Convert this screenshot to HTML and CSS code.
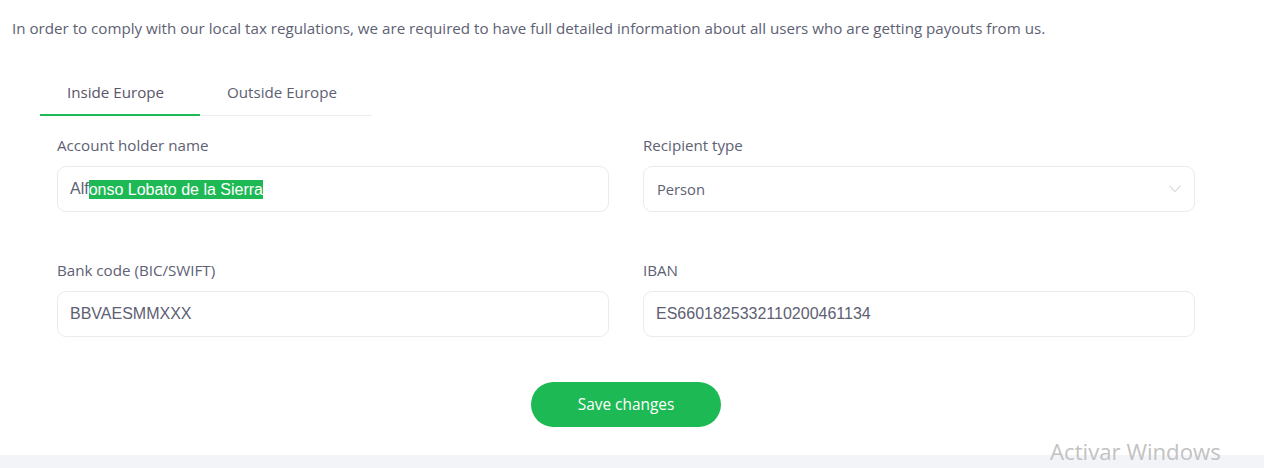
FILE: index.html
```html
<!DOCTYPE html>
<html>
<head>
<meta charset="utf-8">
<link rel="stylesheet" href="styles.css">
</head>
<body>
<main class="page">
  <p class="intro">In order to comply with our local tax regulations, we are required to have full detailed information about all users who are getting payouts from us.</p>
  <nav class="tabs">
    <div class="tab active">Inside Europe</div>
    <div class="tab">Outside Europe</div>
  </nav>
  <form class="form">
    <div class="grid">
      <div class="field">
        <div class="label">Account holder name</div>
        <div class="input">Alf<span class="sel">onso Lobato de la Sierra</span></div>
      </div>
      <div class="field">
        <div class="label">Recipient type</div>
        <div class="input select"><span class="sel-text">Person</span>
          <svg class="chev" width="12" height="8" viewBox="0 0 12 8"><path d="M0.5 0.8 L6 6.6 L11.5 0.8" fill="none" stroke="#c4c6cc" stroke-width="1"/></svg>
        </div>
      </div>
      <div class="field">
        <div class="label">Bank code (BIC/SWIFT)</div>
        <div class="input">BBVAESMMXXX</div>
      </div>
      <div class="field">
        <div class="label">IBAN</div>
        <div class="input">ES6601825332110200461134</div>
      </div>
    </div>
    <div class="actions"><button type="button" class="btn">Save changes</button></div>
  </form>
</main>
<div class="footer-band"></div>
<div class="watermark">Activar Windows</div>
</body>
</html>
```
FILE: styles.css
```css
html, body { margin: 0; padding: 0; background: #fff; }
body { font-family: "Open Sans", "Noto Sans", sans-serif; color: #5d6173; height: 468px; overflow: hidden; position: relative; }
.page { height: 455px; }
.intro { margin: 0; padding: 17px 12px 0; font-size: 15.15px; line-height: 22px; color: #5d6173; }
.tabs { display: flex; margin: 31px 0 0 40px; width: 332px; border-bottom: 1px solid #ececec; }
.tab { width: 160px; box-sizing: border-box; padding: 12px 0 12px 27px; text-align: left; font-size: 15.15px; line-height: 20px; color: #5d6173; }
.tab.active { color: #5a5568; border-bottom: 2px solid #1db954; margin-bottom: -1px; }
.form { padding: 0 69px 0 57px; }
.grid { display: grid; grid-template-columns: 1fr 1fr; column-gap: 34px; row-gap: 47px; padding-top: 18px; }
.label { font-size: 15.15px; line-height: 22px; color: #5d6173; margin-bottom: 10px; }
.input { height: 44px; border: 1px solid #ebebed; border-radius: 9px; box-sizing: content-box; display: flex; align-items: center; padding: 0 12px; font-family: "Liberation Sans", Arial, sans-serif; font-size: 16px; color: #5d6173; }
.sel { background: #1db954; color: #fff; line-height: 19px; }
.select { font-family: "Open Sans", "Noto Sans", sans-serif; font-size: 14.7px; justify-content: space-between; padding-left: 13px; padding-right: 13px; }
.chev { display: block; }
.actions { display: flex; justify-content: center; padding: 45px 0 0 0; }
.btn { width: 190px; height: 45px; border: none; border-radius: 23px; background: #1db954; color: #fff; font-family: "Open Sans", "Noto Sans", sans-serif; font-size: 15.4px; padding: 0; }
.footer-band { height: 13px; background: #f3f4f8; }
.watermark { position: absolute; left: 1050px; top: 437px; font-family: "Open Sans", "Noto Sans", sans-serif; font-size: 22.2px; line-height: 30px; color: #c2c2c2; }
```
